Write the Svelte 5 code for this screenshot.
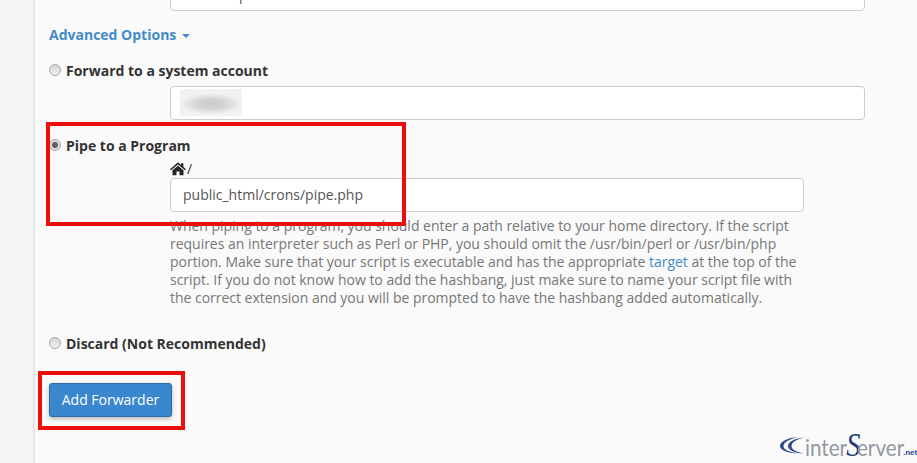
<script>
  const helpBefore = "When piping to a program, you should enter a path relative to your home directory. If the script requires an interpreter such as Perl or PHP, you should omit the /usr/bin/perl or /usr/bin/php portion. Make sure that your script is executable and has the appropriate ";
  const helpAfter = " at the top of the script. If you do not know how to add the hashbang, just make sure to name your script file with the correct extension and you will be prompted to have the hashbang added automatically.";
</script>

<div class="page">
  <aside class="side"></aside>
  <main class="main">
    <div class="indent top-field"><div class="input wide clipped"><span class="clip-text">p</span></div></div>

    <div class="advanced">Advanced Options <span class="caret"></span></div>

    <div class="radio-row first"><span class="radio"></span><span class="label">Forward to a system account</span></div>
    <div class="indent"><div class="input wide"><span class="blur"></span></div></div>

    <div class="radio-row pipe"><span class="radio checked"></span><span class="label">Pipe to a Program</span></div>
    <div class="indent home-line">
      <svg class="home" viewBox="0 0 18 15" width="16" height="14" aria-hidden="true">
        <path fill="#262626" d="M9 0 L12.4 2.9 V1 H15 V5.1 L18 7.7 L16.8 9 L9 2.4 L1.2 9 L0 7.7 Z M2.8 9 L9 3.9 L15.2 9 V14.6 H10.7 V10.4 H7.3 V14.6 H2.8 Z"/>
      </svg><span class="slash">/</span>
    </div>
    <div class="indent"><div class="input path">public_html/crons/pipe.php</div></div>
    <p class="help">{helpBefore}<a href="#target">target</a>{helpAfter}</p>

    <div class="radio-row discard"><span class="radio"></span><span class="label">Discard (Not Recommended)</span></div>

    <button class="btn" type="button">Add Forwarder</button>
  </main>

  <div class="redbox box-pipe"></div>
  <div class="redbox box-btn"></div>

  <div class="logo">
    <svg class="swirl" viewBox="778 434 30 24" width="30" height="24" aria-hidden="true">
      <path fill="#2c4a86" d="M798 437 C786 438 780 442 780 446 C780 450 787 453 798 453.5 C790 452 783.5 450 783.5 446 C783.5 442 790 439 798 437 Z"/>
      <path fill="#2c4a86" d="M804 437.5 C794 438.5 788 442 788 446 C788 450 794 453 804 453.5 C797 452 791.5 450 791.5 446 C791.5 442 797 439.5 804 437.5 Z"/>
    </svg>
    <span class="logo-word">inter<span class="logo-s">S</span>erver</span><span class="logo-net">.net</span>
  </div>
</div>

<style>
  :global(body) { margin: 0; background: #fafafa; }
  .page {
    position: relative;
    display: flex;
    width: 917px;
    height: 463px;
    overflow: hidden;
    background: #fafafa;
    font-family: "Open Sans", sans-serif;
    font-size: 14px;
    color: #333;
  }
  .side {
    width: 33px;
    flex: none;
    background: #f5f5f5;
    border-right: 2px solid #e4e4e4;
  }
  .main { flex: 1; padding-left: 14px; min-width: 0; opacity: 0.999; }
  .indent { padding-left: 121px; }
  .input {
    box-sizing: border-box;
    background: #fff;
    border: 1px solid #ccc;
    border-radius: 4px;
    color: #555;
    font-size: 14px;
    line-height: 20px;
    padding: 6px 12px;
    height: 34px;
  }
  .wide { width: 695px; }
  .top-field { height: 11px; overflow: hidden; }
  .clipped { margin-top: -23px; }
  .clip-text { margin-left: 56px; position: relative; top: 1px; }
  .blur {
    display: block;
    width: 62px;
    height: 27px;
    margin: -4px 0 0 -3px;
    background: radial-gradient(ellipse 50% 40% at 50% 55%, #c9c9c9 0%, #d4d4d4 45%, #ececec 90%, #f2f2f2 100%);
  }
  .path { width: 634px; }
  .advanced {
    margin-top: 15px;
    height: 18px;
    line-height: 18px;
    color: #428bca;
    font-weight: 700;
    font-size: 14px;
  }
  .caret {
    display: inline-block;
    width: 0;
    height: 0;
    margin-left: 2px;
    vertical-align: middle;
    border-top: 4px solid #428bca;
    border-left: 4px solid transparent;
    border-right: 4px solid transparent;
  }
  .radio-row { display: flex; align-items: center; height: 20px; font-weight: 700; }
  .first { margin-top: 17px; margin-bottom: 5px; }
  .pipe { margin-top: 16px; }
  .discard { margin-top: 27px; }
  .label { margin-left: 5px; line-height: 20px; }
  .radio {
    box-sizing: border-box;
    width: 12px;
    height: 12px;
    margin-top: -3px;
    border-radius: 50%;
    border: 1px solid #a9a9a9;
    background: linear-gradient(#d4d4d4, #f2f2f2);
    flex: none;
  }
  .radio.checked {
    background: radial-gradient(circle, #5f5f5f 0 2.5px, #d8d8d8 3.4px);
  }
  .home-line {
    height: 17px;
    margin-top: 4px;
    margin-bottom: 1px;
    display: flex;
    align-items: center;
    line-height: 17px;
    color: #333;
  }
  .home { flex: none; }
  .slash { margin-left: 1px; }
  .help {
    margin: 5px 0 0 121px;
    width: 640px;
    color: #777;
    font-size: 14px;
    line-height: 18px;
    letter-spacing: -0.02px;
  }
  .help a { color: #428bca; text-decoration: none; }
  .btn {
    display: block;
    margin-top: 29px;
    width: 123px;
    height: 34px;
    background: #3a87cf;
    border: 1px solid #2d6ca8;
    border-radius: 3px;
    color: #fff;
    font-family: "Open Sans", sans-serif;
    font-size: 14px;
    box-shadow: 0 2px 4px rgba(0,0,0,.25);
    padding: 0 0 2px;
  }
  .redbox { position: absolute; border: 4px solid #ec0d0d; box-sizing: border-box; }
  .box-pipe { left: 46px; top: 122px; width: 360px; height: 104px; }
  .box-btn { left: 38px; top: 371px; width: 147px; height: 59px; }
  .logo {
    position: absolute;
    left: 778px;
    top: 434px;
    width: 139px;
    height: 29px;
  }
  .swirl { position: absolute; left: 0; top: 0; }
  .logo-word {
    position: absolute;
    left: 27px;
    top: -3px;
    font-family: "Lato", sans-serif;
    font-weight: 400;
    font-size: 24px;
    line-height: 28px;
    color: #9298a1;
    white-space: nowrap;
    transform: scaleX(0.86);
    transform-origin: left top;
  }
  .logo-s {
    color: #1f3c78;
    font-family: "Liberation Serif", serif;
    font-style: italic;
    font-size: 33px;
    margin: 0 -4px 0 -1px;
  }
  .logo-net {
    position: absolute;
    left: 125px;
    top: 14px;
    color: #2c4a86;
    font-family: "Liberation Sans", sans-serif;
    font-size: 8px;
    line-height: 10px;
    font-weight: 700;
  }
</style>
